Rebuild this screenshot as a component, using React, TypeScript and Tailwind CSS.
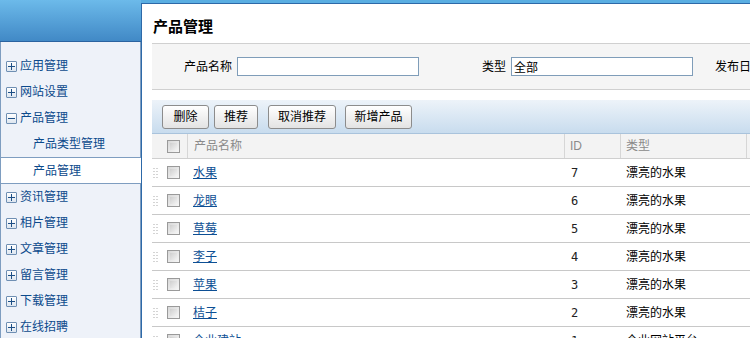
import React from "react";

const menu = [
  { label: "应用管理", kind: "plus" },
  { label: "网站设置", kind: "plus" },
  { label: "产品管理", kind: "minus" },
  { label: "产品类型管理", kind: "sub" },
  { label: "产品管理", kind: "active" },
  { label: "资讯管理", kind: "plus" },
  { label: "相片管理", kind: "plus" },
  { label: "文章管理", kind: "plus" },
  { label: "留言管理", kind: "plus" },
  { label: "下载管理", kind: "plus" },
  { label: "在线招聘", kind: "plus" },
];

const rows = [
  { name: "水果", id: 7, type: "漂亮的水果" },
  { name: "龙眼", id: 6, type: "漂亮的水果" },
  { name: "草莓", id: 5, type: "漂亮的水果" },
  { name: "李子", id: 4, type: "漂亮的水果" },
  { name: "苹果", id: 3, type: "漂亮的水果" },
  { name: "桔子", id: 2, type: "漂亮的水果" },
  { name: "企业建站", id: 1, type: "企业网站平台" },
];

function ToggleBox({ open }: { open: boolean }) {
  return (
    <span className="w-[11px] h-[11px] border border-[#6f8fb3] rounded-[1px] bg-gradient-to-b from-white to-[#dde6f0] flex items-center justify-center">
      <svg width="7" height="7" viewBox="0 0 7 7">
        <rect x="0" y="3" width="7" height="1" fill="#1d4f86" />
        {!open && <rect x="3" y="0" width="1" height="7" fill="#1d4f86" />}
      </svg>
    </span>
  );
}

function Check() {
  return (
    <span className="block w-[13px] h-[13px] border border-[#9a9a9a] bg-gradient-to-br from-[#d8d8d8] to-[#f7f7f7] p-[2px]">
      <span className="block w-full h-full bg-gradient-to-br from-[#cfcfcf] to-[#f3f3f3]" />
    </span>
  );
}

function Grip() {
  return (
    <svg width="6" height="10" viewBox="0 0 6 10">
      {[0, 3, 6, 9].map((y) =>
        [0, 3].map((x) => (
          <rect key={`${x}-${y}`} x={x} y={y} width="2" height="1" fill="#d4d4d4" />
        ))
      )}
    </svg>
  );
}

function Btn({ children, className = "" }: { children: React.ReactNode; className?: string }) {
  return (
    <button
      className={`h-[24px] border border-[#8c8c8c] rounded-[3px] bg-gradient-to-b from-white to-[#e3e3e3] text-[12px] text-black ${className}`}
    >
      {children}
    </button>
  );
}

export default function App() {
  return (
    <div
      className="flex w-[750px] h-[338px] overflow-hidden bg-white text-[12px]"
      style={{ fontFamily: '"Liberation Sans", "Noto Sans CJK SC", sans-serif' }}
    >
      {/* 左侧菜单 */}
      <div className="w-[141px] shrink-0 flex flex-col">
        <div className="h-[42px] shrink-0 bg-gradient-to-b from-[#6cbaea] to-[#4189c6] border-b border-[#2a63a0]" />
        <div className="flex-1 flex flex-col pt-[11px] bg-[#eef2f9] border-l border-r border-[#7e9dc0]">
          {menu.map((m, i) => {
            if (m.kind === "active") {
              return (
                <div
                  key={i}
                  className="h-[27px] shrink-0 -mr-px bg-white border-y border-[#7e9dc0] flex items-center pl-[32px] text-[#0c4a8c]"
                >
                  {m.label}
                </div>
              );
            }
            if (m.kind === "sub") {
              return (
                <div key={i} className="h-[26px] shrink-0 flex items-center pl-[32px] text-[#0c4a8c]">
                  {m.label}
                </div>
              );
            }
            return (
              <div key={i} className="h-[26px] shrink-0 flex items-center gap-[3px] pl-[5px] text-[#0c4a8c]">
                <ToggleBox open={m.kind === "minus"} />
                <span>{m.label}</span>
              </div>
            );
          })}
        </div>
      </div>

      {/* 主区域 */}
      <div className="flex-1 flex flex-col pt-[3px] bg-[#5aaee2]">
        <div className="flex-1 bg-white border-t border-l border-[#2d69a8] pl-[10px] flex flex-col">
          <h1 className="h-[39px] shrink-0 flex items-center pt-[8px] pl-px text-[15px] font-bold text-black">产品管理</h1>

          {/* 搜索栏 */}
          <div className="h-[47px] shrink-0 bg-[#f5f5f5] border-y border-[#d0d0d0] flex items-center whitespace-nowrap text-black">
            <span className="ml-[32px]">产品名称</span>
            <input className="ml-[5px] w-[182px] h-[19px] border border-[#7f9db9] bg-white px-1 outline-none" />
            <span className="ml-[63px]">类型</span>
            <input
              defaultValue="全部"
              className="ml-[5px] w-[182px] h-[19px] border border-[#7f9db9] bg-white px-[2px] outline-none text-[12px]"
            />
            <span className="ml-[22px]">发布日期</span>
          </div>

          {/* 工具栏 */}
          <div className="mt-[10px] h-[34px] shrink-0 bg-gradient-to-b from-[#edf3f9] to-[#c8dcee] border-b border-[#a9c3dc] flex items-center pl-[10px]">
            <Btn className="w-[47px]">删除</Btn>
            <Btn className="w-[44px] ml-[5px]">推荐</Btn>
            <Btn className="w-[68px] ml-[10px]">取消推荐</Btn>
            <Btn className="w-[67px] ml-[9px]">新增产品</Btn>
          </div>

          {/* 表头 */}
          <div className="h-[25px] shrink-0 flex bg-[#f3f3f3] border-b border-[#cfcfcf] text-[#8a8a8a]">
            <div className="w-[36px] flex items-center pl-[15px] border-r border-[#d6d6d6]">
              <Check />
            </div>
            <div className="w-[377px] flex items-center pl-[6px] border-r border-[#d6d6d6]">产品名称</div>
            <div className="w-[56px] flex items-center pl-[5px] border-r border-[#d6d6d6]">ID</div>
            <div className="w-[126px] flex items-center pl-[5px] border-r border-[#d6d6d6]">类型</div>
            <div className="flex-1" />
          </div>

          {/* 数据行 */}
          {rows.map((r) => (
            <div key={r.id} className="h-[28px] shrink-0 flex items-center border-b border-[#c8c8c8] text-black">
              <div className="w-[36px] flex items-center pl-px">
                <Grip />
                <span className="ml-[8px]">
                  <Check />
                </span>
              </div>
              <div className="w-[377px] pl-[5px]">
                <a href="#" className="text-[#0d4f94] underline">
                  {r.name}
                </a>
              </div>
              <div className="w-[56px] pl-[6px] text-[#222]" style={{ fontFamily: '"DejaVu Sans Mono", monospace' }}>
                {r.id}
              </div>
              <div className="w-[126px] pl-[5px]">{r.type}</div>
            </div>
          ))}
        </div>
      </div>
    </div>
  );
}
